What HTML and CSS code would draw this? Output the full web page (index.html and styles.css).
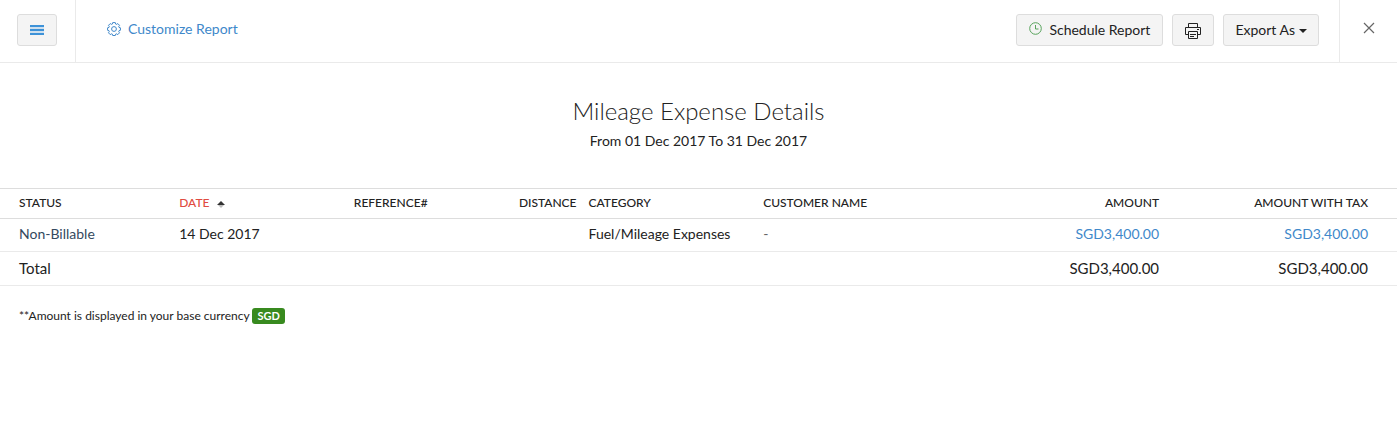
FILE: index.html
```html
<!DOCTYPE html>
<html lang="en">

<head>
  <meta charset="UTF-8" />
  <meta name="viewport" content="width=device-width, initial-scale=1.0" />
  <title>Mileage Expense Details</title>
  <link rel="stylesheet" href="styles.css">
</head>

<body>
  <header class="toolbar">
    <div class="toolbar-menu">
      <button type="button" class="btn btn-menu" aria-label="Menu">
        <svg width="14" height="10" viewBox="0 0 14 10" fill="#3d92d8">
          <rect y="0" width="14" height="2" />
          <rect y="4" width="14" height="2" />
          <rect y="8" width="14" height="2" />
          <rect y="2" width="14" height="6" opacity=".2" />
        </svg>
      </button>
    </div>
    <a href="#" class="customize">
      <svg width="14" height="14" viewBox="0 0 14 14" fill="none" stroke="#4088ca" stroke-linejoin="round">
        <path d="M5.7 .6h2.6l.4 1.5.7.3 1.4-.8 1.7 1.7-.8 1.3.3.8 1.4.4v2.5l-1.4.4-.3.8.8 1.3-1.7 1.8-1.4-.8-.7.3-.4 1.4H5.7l-.4-1.4-.7-.3-1.4.8-1.7-1.8.8-1.3-.3-.8-1.4-.4V5.8L2 5.4l.3-.8-.8-1.3 1.7-1.7 1.4.8.7-.3z" />
        <circle cx="7" cy="7" r="2.4" />
      </svg>
      Customize Report
    </a>
    <div class="toolbar-actions">
      <button type="button" class="btn">
        <svg class="clock" width="13" height="13" viewBox="0 0 13 13" fill="none" stroke="#57a35b">
          <circle cx="6.5" cy="6.5" r="5.8" />
          <path d="M6.5 3v4h3" />
        </svg>
        Schedule Report
      </button>
      <button type="button" class="btn btn-print" aria-label="Print">
        <svg width="16" height="16" viewBox="0 0 16 16" fill="none" stroke="#222">
          <path d="M3.5 4.5v-4h9v4M3.5 11.5h-3v-7h15v7h-3M3.5 8.5h9v7h-9zM5 11.5h6M5 13.5h4M12 6.5h2" />
        </svg>
      </button>
      <button type="button" class="btn btn-export">Export As <span class="caret"></span></button>
    </div>
    <div class="toolbar-close">
      <button type="button" class="close" aria-label="Close">
        <svg width="12" height="12" viewBox="0 0 12 12" fill="none" stroke="#666" stroke-width="1.2">
          <path d="M1 1l10 10M11 1L1 11" />
        </svg>
      </button>
    </div>
  </header>

  <main>
    <div class="report-title">
      <h1>Mileage Expense Details</h1>
      <p>From 01 Dec 2017 To 31 Dec 2017</p>
    </div>

    <table class="report">
      <colgroup>
        <col class="col-status">
        <col class="col-date">
        <col class="col-reference">
        <col class="col-distance">
        <col class="col-category">
        <col class="col-customer">
        <col class="col-amount">
        <col class="col-tax">
      </colgroup>
      <thead>
        <tr>
          <th>STATUS</th>
          <th class="sorted" aria-sort="ascending">DATE
            <svg width="8" height="8" viewBox="0 0 8 8">
              <path d="M0 5l4-4 4 4z" fill="#333" />
              <path d="M1 5h6L4 8z" fill="#bbb" />
            </svg>
          </th>
          <th>REFERENCE#</th>
          <th class="num">DISTANCE</th>
          <th>CATEGORY</th>
          <th>CUSTOMER NAME</th>
          <th class="num">AMOUNT</th>
          <th class="num">AMOUNT WITH TAX</th>
        </tr>
      </thead>
      <tbody>
        <tr>
          <td class="status">Non-Billable</td>
          <td>14 Dec 2017</td>
          <td></td>
          <td></td>
          <td>Fuel/Mileage Expenses</td>
          <td class="empty">-</td>
          <td class="num"><a href="#">SGD3,400.00</a></td>
          <td class="num"><a href="#">SGD3,400.00</a></td>
        </tr>
      </tbody>
      <tfoot>
        <tr>
          <td colspan="6">Total</td>
          <td class="num">SGD3,400.00</td>
          <td class="num">SGD3,400.00</td>
        </tr>
      </tfoot>
    </table>

    <p class="note">**Amount is displayed in your base currency <span class="badge">SGD</span></p>
  </main>
</body>

</html>
```

FILE: styles.css
```css
* {
  box-sizing: border-box;
}

body {
  margin: 0;
  font-family: Lato, "Open Sans", sans-serif;
  font-size: 14px;
  line-height: 20px;
  color: #222;
  background: #fff;
}

a {
  color: #4088ca;
  text-decoration: none;
}

/* toolbar */
.toolbar {
  display: flex;
  align-items: stretch;
  height: 63px;
  border-bottom: 1px solid #eaeaea;
}

.toolbar-menu {
  width: 76px;
  padding: 14px 0 0 17px;
  border-right: 1px solid #eaeaea;
}

.btn {
  display: flex;
  align-items: center;
  justify-content: center;
  gap: 7px;
  height: 32px;
  padding: 0 12px 2px;
  font-family: inherit;
  font-size: 14px;
  color: #222;
  background: #f4f4f4;
  border: 1px solid #ddd;
  border-radius: 3px;
  cursor: pointer;
}

.btn-menu {
  width: 40px;
  padding: 0;
}

.btn-print {
  width: 42px;
  padding: 2px 0 0;
}

.btn-export {
  gap: 4px;
  padding: 0 11px 2px;
}

.clock {
  margin-bottom: 2px;
}

.caret {
  border: 4px solid transparent;
  border-top-color: #222;
  border-bottom: 0;
  margin-top: 4px;
}

.customize {
  display: flex;
  align-items: center;
  gap: 7px;
  padding: 0 0 4px 31px;
}

.toolbar-actions {
  display: flex;
  gap: 9px;
  margin-left: auto;
  padding: 14px 20px 0 0;
}

.toolbar-close {
  display: flex;
  align-items: center;
  justify-content: center;
  width: 58px;
  padding-bottom: 6px;
  border-left: 1px solid #eaeaea;
}

.close {
  display: flex;
  padding: 0;
  background: none;
  border: 0;
  cursor: pointer;
}

/* report */
.report-title {
  padding: 32px 0 37px;
  text-align: center;
}

.report-title h1 {
  margin: 0 0 4px;
  font-size: 24px;
  font-weight: 300;
  line-height: 32px;
}

.report-title p {
  margin: 0;
}

.report {
  width: 100%;
  table-layout: fixed;
  border-collapse: collapse;
}

.col-status {
  width: 12.4%;
}

.col-date,
.col-category {
  width: 12.5%;
}

.col-reference,
.col-distance {
  width: 8.4%;
}

.col-customer,
.col-amount {
  width: 14.6%;
}

.report th,
.report td {
  padding: 5px 6px 7px;
  text-align: left;
  white-space: nowrap;
}

.report th {
  height: 30px;
  padding: 4px 6px 5px;
  font-size: 12px;
  font-weight: 500;
  border-top: 1px solid #ddd;
  border-bottom: 1px solid #ddd;
}

.report td {
  border-bottom: 1px solid #eaeaea;
}

.report tfoot td {
  padding: 6px 6px 7px;
  font-size: 15px;
}

.report th:first-child,
.report td:first-child {
  padding-left: 19px;
}

.report th:last-child,
.report td:last-child {
  padding-right: 29px;
}

.report .num {
  text-align: right;
}

.report .sorted {
  color: #e04b41;
}

.sorted svg {
  margin-left: 4px;
  vertical-align: -1px;
}

.status {
  color: #34495e;
}

.empty {
  color: #666;
}

.note {
  margin: 20px 19px;
  font-size: 12px;
}

.badge {
  display: inline-block;
  padding: 0 5px;
  font-size: 11px;
  font-weight: 700;
  line-height: 16px;
  color: #fff;
  background: #388a1f;
  border-radius: 3px;
}
```
